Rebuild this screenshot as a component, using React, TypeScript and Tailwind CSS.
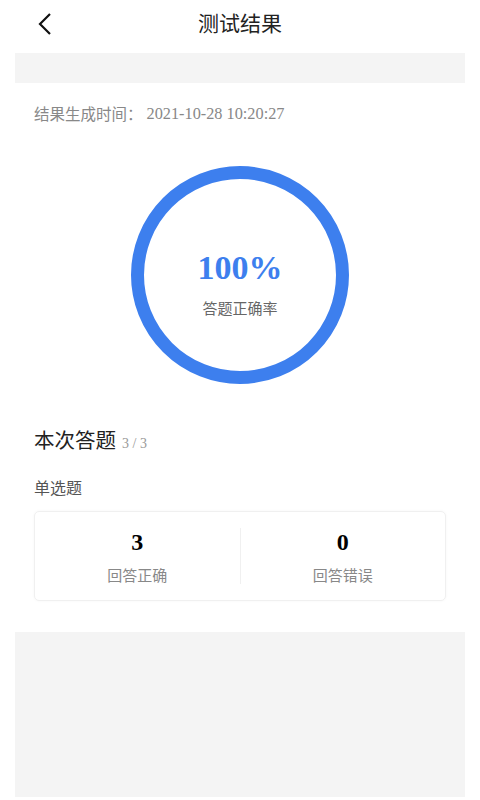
const SERIF = "font-['Liberation_Serif','Times_New_Roman',serif]";

function Ring({ percent }: { percent: number }) {
  return (
    <div className="relative w-[220px] h-[220px] mx-auto">
      <svg width="220" height="220" viewBox="0 0 220 220" className="absolute inset-0">
        <circle cx="110" cy="110" r="102.5" fill="none" stroke="#3d7fee" strokeWidth="13" />
      </svg>
      <div className="absolute inset-0 flex flex-col items-center justify-center">
        <span className={`${SERIF} text-[34px] font-bold text-[#3d7fee] leading-none mt-[16px]`}>
          {percent}%
        </span>
        <span className="mt-[15px] text-[15px] text-[#666] leading-none">答题正确率</span>
      </div>
    </div>
  );
}

function Stat({ value, label }: { value: number; label: string }) {
  return (
    <div className="flex-1 flex flex-col items-center">
      <span className={`${SERIF} text-[24px] font-bold text-black leading-none`}>{value}</span>
      <span className="mt-[13px] text-[15px] text-[#888] leading-none">{label}</span>
    </div>
  );
}

export default function App() {
  return (
    <div className="w-[480px] h-[800px] bg-white font-['Noto_Sans_CJK_SC','Noto_Sans',sans-serif] flex flex-col overflow-hidden">
      {/* Header */}
      <div className="relative h-[53px] flex items-center justify-center shrink-0">
        <svg width="16" height="24" viewBox="0 0 16 24" className="absolute left-[37px] top-[12px]">
          <path d="M13 2 L3 12 L13 22" fill="none" stroke="#111" strokeWidth="2.2" />
        </svg>
        <span className="text-[21px] text-[#222] mt-[-7px]">测试结果</span>
      </div>

      <div className="mx-[15px] flex flex-col flex-1">
        <div className="h-[30px] bg-[#f4f4f4] shrink-0" />

        <div className="px-[19px] pt-[20px]">
          <div className="flex items-center text-[15.5px] text-[#888] leading-none h-[22px]">
            <span>结果生成时间：</span>
            <span className={`${SERIF} ml-[4px] text-[16.3px]`}>2021-10-28 10:20:27</span>
          </div>

          <div className="mt-[40px]">
            <Ring percent={100} />
          </div>

          <div className="mt-[39px] flex items-baseline">
            <span className="text-[20.5px] text-[#222]">本次答题</span>
            <span className={`${SERIF} ml-[6px] text-[14px] text-[#999]`}>3 / 3</span>
          </div>

          <div className="mt-[24px] text-[16px] text-[#555] leading-none">单选题</div>

          <div className="mt-[16px] h-[90px] rounded-[5px] border border-[#f0f0f0] shadow-[0_0_3px_rgba(0,0,0,0.04)] flex items-center">
            <Stat value={3} label="回答正确" />
            <div className="w-px h-[56px] bg-[#f0f0f0]" />
            <Stat value={0} label="回答错误" />
          </div>
        </div>

        <div className="mt-[31px] flex-1 bg-[#f4f4f4] mb-[3px]" />
      </div>
    </div>
  );
}
